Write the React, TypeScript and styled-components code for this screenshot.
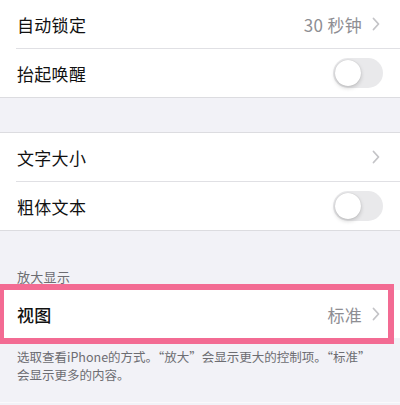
import React from "react";
import styled, { createGlobalStyle } from "styled-components";

const GlobalStyle = createGlobalStyle`
  html, body {
    margin: 0;
    padding: 0;
    background: #f2f2f7;
  }
  body {
    font-family: "Noto Sans CJK SC", "Noto Sans", sans-serif;
    -webkit-font-smoothing: antialiased;
  }
`;

const Page = styled.div`
  width: 400px;
  height: 405px;
  overflow: hidden;
  background: #f2f2f7;
  display: flex;
  flex-direction: column;
`;

const Group = styled.div<{ top?: boolean }>`
  background: #fff;
  border-top: ${({ top }) => (top ? "1px solid #dcdce0" : "none")};
  border-bottom: 1px solid #dcdce0;
  display: flex;
  flex-direction: column;
`;

const Gap = styled.div<{ h: number }>`
  height: ${({ h }) => h}px;
  flex-shrink: 0;
`;

const Row = styled.div`
  height: 48px;
  display: flex;
  align-items: center;
  padding: 0 17px 0 17px;
  box-sizing: border-box;
`;

const Separator = styled.div`
  height: 1px;
  margin-left: 16px;
  background: #e0e0e4;
`;

const Label = styled.span<{ strong?: boolean }>`
  flex: 1;
  font-size: 17px;
  color: #111;
  font-weight: ${({ strong }) => (strong ? 500 : 400)};
  letter-spacing: 0.3px;
`;

const Value = styled.span`
  font-size: 17px;
  color: #8e8e93;
  margin-right: 10px;
  letter-spacing: 0.3px;
`;

const Chevron = styled.svg`
  width: 8px;
  height: 14px;
  margin-right: 3px;
`;

const Track = styled.div`
  width: 50px;
  height: 30px;
  border-radius: 15px;
  background: #e9e9eb;
  position: relative;
`;

const Knob = styled.div`
  position: absolute;
  left: 2px;
  top: 2px;
  width: 26px;
  height: 26px;
  border-radius: 50%;
  background: #fff;
  box-shadow: 0 2px 4px rgba(0, 0, 0, 0.18), 0 0 1px rgba(0, 0, 0, 0.2);
`;

const SectionHeader = styled.div`
  height: 59px;
  display: flex;
  align-items: flex-end;
  padding: 0 17px 4px;
  box-sizing: border-box;
  font-size: 13px;
  color: #6d6d72;
  letter-spacing: 0.3px;
`;

const HighlightWrap = styled.div`
  position: relative;
  background: #fff;
`;

const Highlight = styled.div`
  position: absolute;
  left: -2px;
  top: -6px;
  width: 396px;
  height: 60px;
  box-sizing: border-box;
  border: 6px solid #f36b93;
  pointer-events: none;
`;

const Footer = styled.div`
  padding: 10px 17px 0;
  display: flex;
  flex-direction: column;
  font-size: 12.5px;
  color: #6d6d72;
  white-space: nowrap;
`;

const FooterLine = styled.span`
  height: 18px;
  line-height: 18px;
`;

const BottomLine = styled.div`
  margin-top: auto;
  margin-bottom: 2px;
  height: 1px;
  background: #fafafc;
`;

const Arrow = () => (
  <Chevron viewBox="0 0 8 14">
    <path
      d="M1.5 1.5 L6.5 7 L1.5 12.5"
      fill="none"
      stroke="#c4c4c7"
      strokeWidth="1.8"
      strokeLinecap="round"
      strokeLinejoin="round"
    />
  </Chevron>
);

const Switch = () => (
  <Track>
    <Knob />
  </Track>
);

export default function App() {
  return (
    <Page>
      <GlobalStyle />
      <Group>
        <Row>
          <Label>自动锁定</Label>
          <Value>30 秒钟</Value>
          <Arrow />
        </Row>
        <Separator />
        <Row>
          <Label>抬起唤醒</Label>
          <Switch />
        </Row>
      </Group>
      <Gap h={34} />
      <Group top>
        <Row>
          <Label>文字大小</Label>
          <Arrow />
        </Row>
        <Separator />
        <Row>
          <Label>粗体文本</Label>
          <Switch />
        </Row>
      </Group>
      <SectionHeader>放大显示</SectionHeader>
      <HighlightWrap>
        <Row>
          <Label strong>视图</Label>
          <Value>标准</Value>
          <Arrow />
        </Row>
        <Highlight />
      </HighlightWrap>
      <Footer>
        <FooterLine>选取查看iPhone的方式。“放大”会显示更大的控制项。“标准”</FooterLine>
        <FooterLine>会显示更多的内容。</FooterLine>
      </Footer>
      <BottomLine />
    </Page>
  );
}
